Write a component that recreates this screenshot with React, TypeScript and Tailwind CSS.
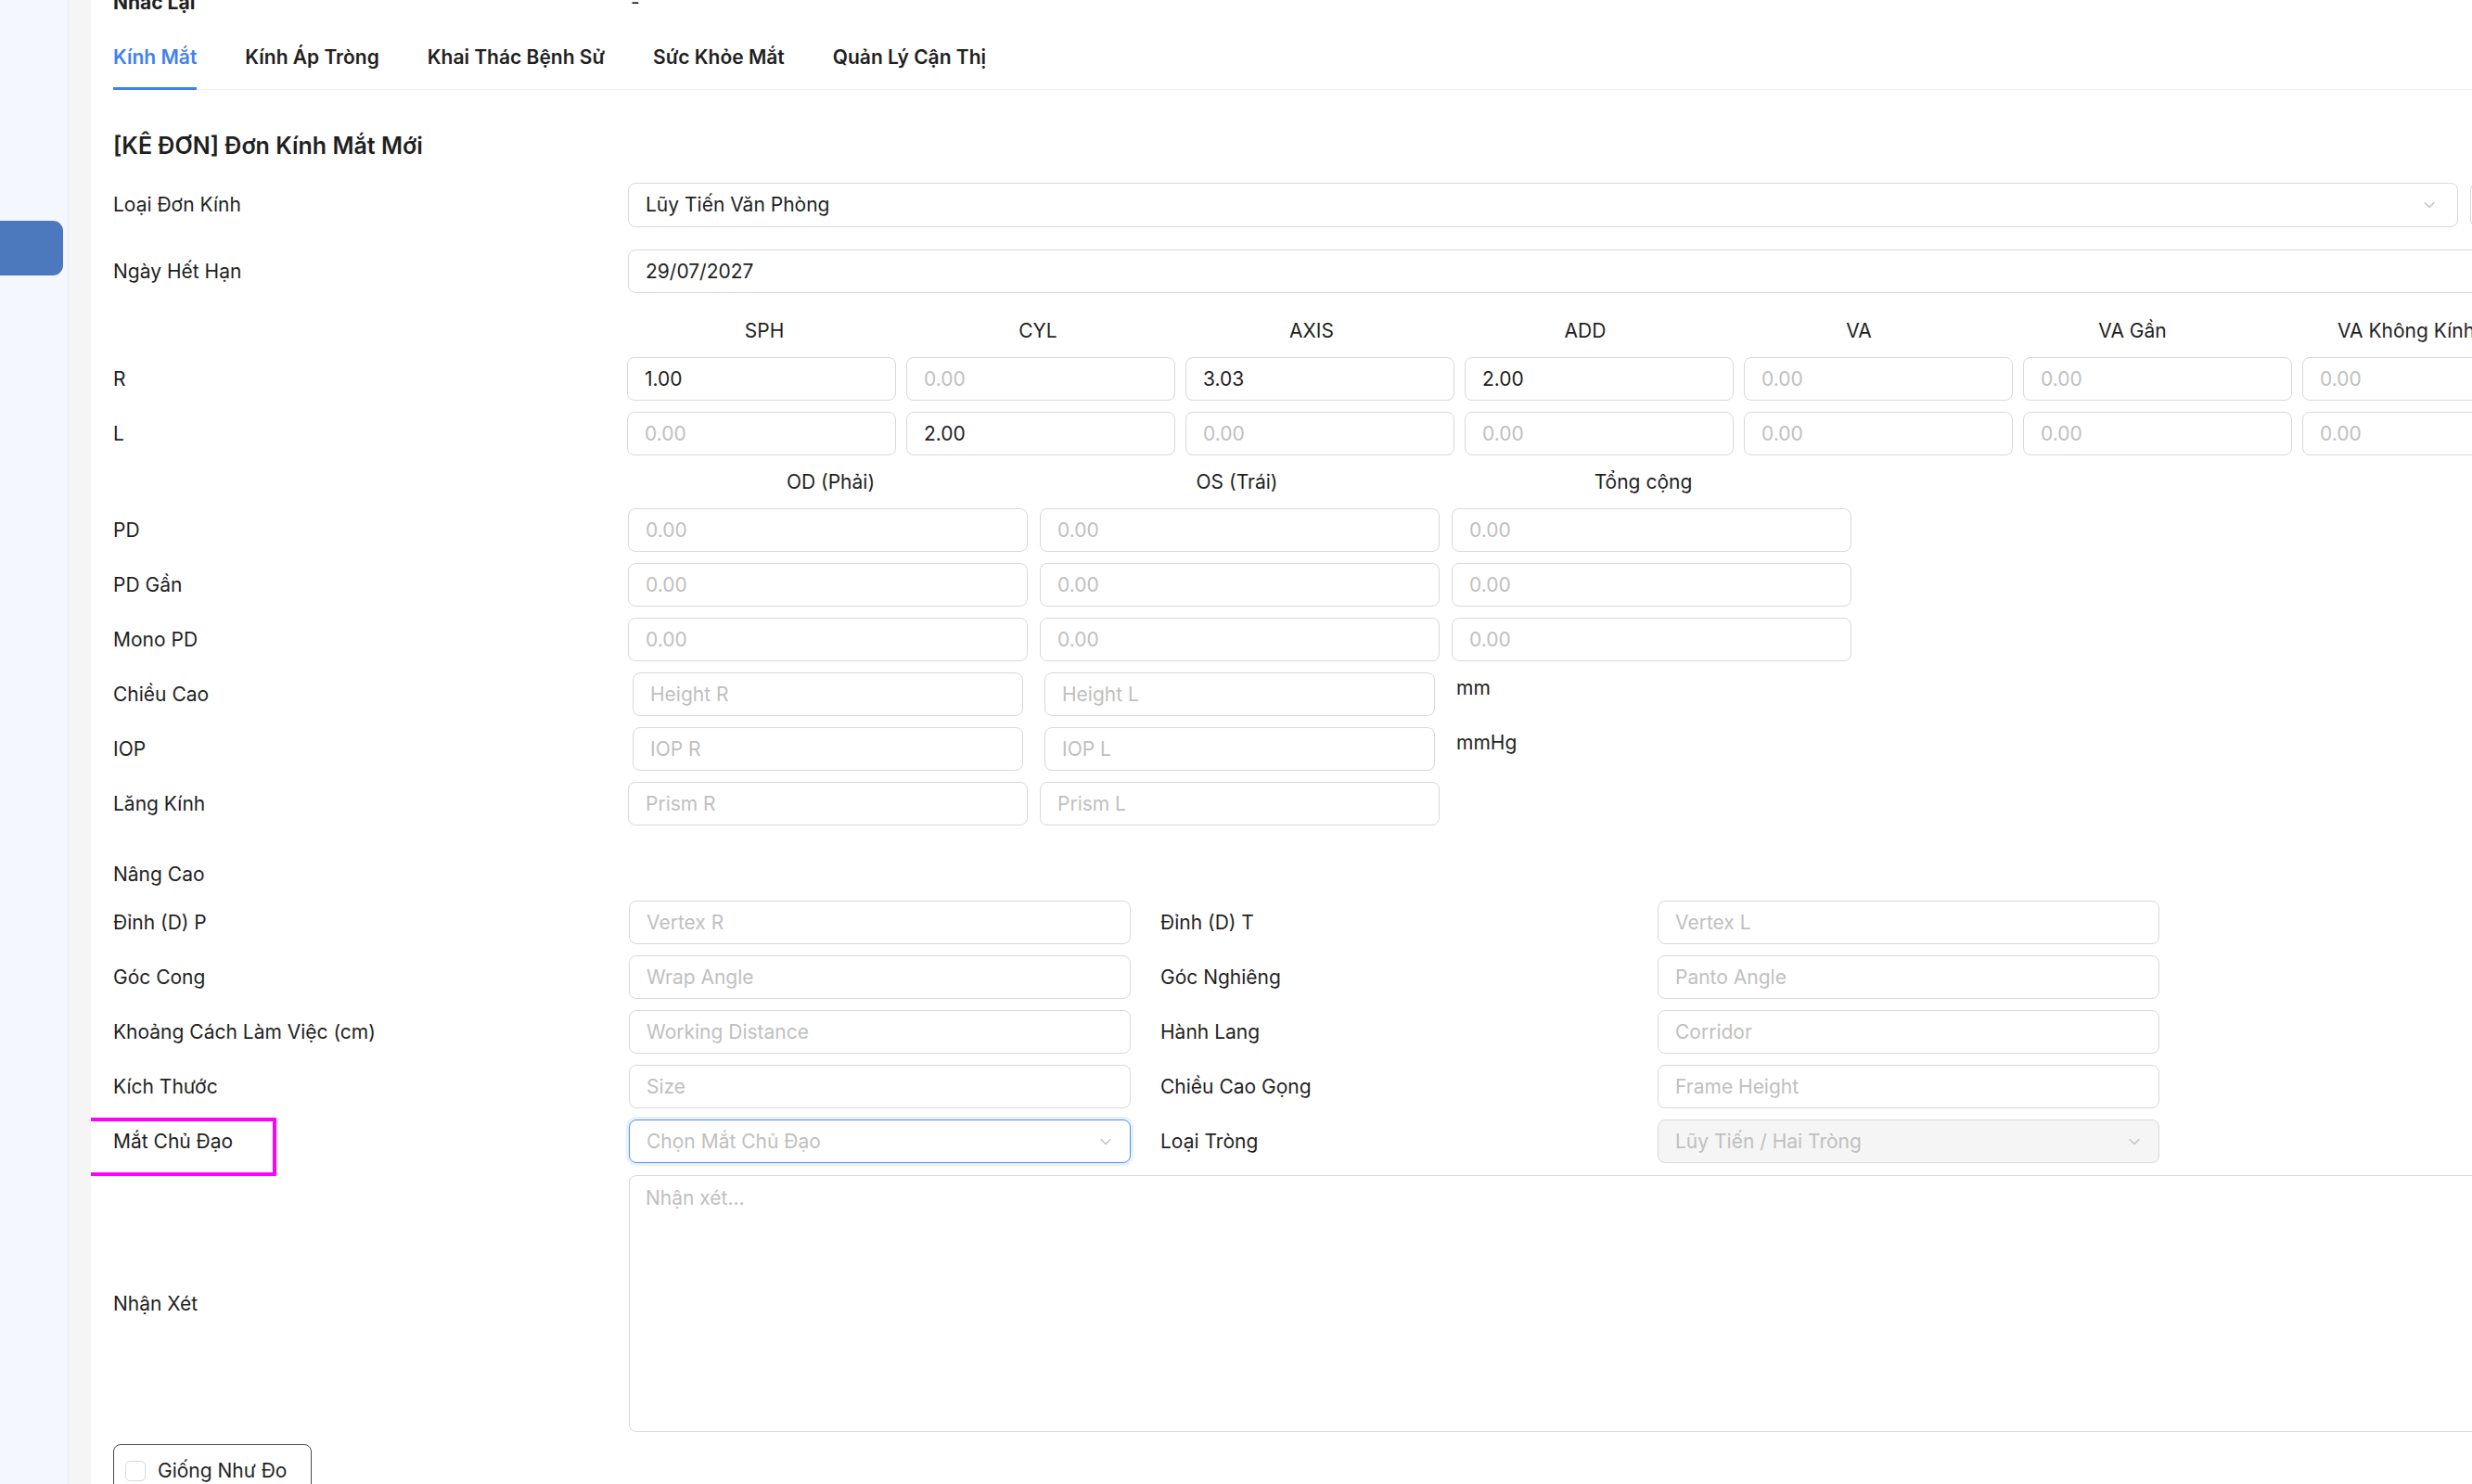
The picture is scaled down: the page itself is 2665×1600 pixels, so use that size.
import { ChevronDown } from "lucide-react";

const inputBase =
	"h-[47px] shrink-0 rounded-[8px] border border-[#d9d9d9] bg-white pl-[18px] text-[21px] text-[#1f1f1f] placeholder:text-[#bfbfbf] outline-none";

const Field = ({ w, value, placeholder }: { w: string; value?: string; placeholder?: string }) => (
	<input className={`${inputBase} ${w}`} defaultValue={value} placeholder={placeholder} />
);

const Label = ({ children }: { children: React.ReactNode }) => (
	<div className="w-[555px] shrink-0 text-[21px] leading-[28px]">{children}</div>
);

const tabs = ["Kính Mắt", "Kính Áp Tròng", "Khai Thác Bệnh Sử", "Sức Khỏe Mắt", "Quản Lý Cận Thị"];
const rxCols = ["SPH", "CYL", "AXIS", "ADD", "VA", "VA Gần", "VA Không Kính"];
const rRow = ["1.00", "", "3.03", "2.00", "", "", ""];
const lRow = ["", "2.00", "", "", "", "", ""];

const advanced = [
	["Đỉnh (D) P", "Vertex R", "Đỉnh (D) T", "Vertex L"],
	["Góc Cong", "Wrap Angle", "Góc Nghiêng", "Panto Angle"],
	["Khoảng Cách Làm Việc (cm)", "Working Distance", "Hành Lang", "Corridor"],
	["Kích Thước", "Size", "Chiều Cao Gọng", "Frame Height"],
];

function App() {
	return (
		<div className="flex w-[2665px] h-[1600px] overflow-hidden bg-white text-[#1f1f1f] font-['Inter','Noto_Sans',sans-serif]">
			<aside className="w-[74px] shrink-0 bg-[#f4f7fd] border-r border-[#e6ebf3] pt-[238px]">
				<div className="w-[68px] h-[59px] bg-[#4c78bd] rounded-r-[11px]" />
			</aside>
			<div className="w-[24px] shrink-0 bg-[#f5f5f5]" />

			<main className="flex-1 min-w-0 pl-[24px] overflow-hidden">
				{/* reminder row, cut at the top */}
				<div className="flex mt-[-11px] h-[28px] text-[21px] leading-[28px]">
					<div className="w-[558px] shrink-0 font-bold">Nhắc Lại</div>
					<div>-</div>
				</div>

				{/* tabs */}
				<div className="mt-[31px] flex gap-[52px] border-b border-[#eef0f3] text-[21px] leading-[28px] font-semibold">
					{tabs.map((t, i) => (
						<div
							key={t}
							className={
								i === 0
									? "pb-[18px] border-b-[3px] border-[#3f80f2] text-[#3f80f2] mb-[-1px]"
									: "pb-[18px] border-b-[3px] border-transparent mb-[-1px]"
							}
						>
							{t}
						</div>
					))}
				</div>

				<h2 className="mt-[44px] text-[25px] leading-[32px] font-semibold">[KÊ ĐƠN] Đơn Kính Mắt Mới</h2>

				{/* lens type */}
				<div className="mt-[24px] flex items-center">
					<Label>Loại Đơn Kính</Label>
					<div className="flex gap-[13px]">
						<div className="w-[1973px] h-[48px] rounded-[8px] border border-[#d9d9d9] flex items-center justify-between pl-[18px] pr-[20px] text-[21px]">
							<span>Lũy Tiến Văn Phòng</span>
							<ChevronDown size={20} strokeWidth={1.4} className="text-[#bfbfbf]" />
						</div>
						<div className="w-[60px] h-[48px] rounded-[8px] border border-[#d9d9d9]" />
					</div>
				</div>

				<div className="mt-[24px] flex items-center">
					<Label>Ngày Hết Hạn</Label>
					<Field w="w-[2300px]" value="29/07/2027" />
				</div>

				{/* refraction table */}
				<div className="mt-[27px] flex">
					<div className="w-[557px] shrink-0" />
					<div className="flex gap-[5px] text-[21px] leading-[28px]">
						{rxCols.map((c) => (
							<div key={c} className="w-[290px] shrink-0 text-center">
								{c}
							</div>
						))}
					</div>
				</div>
				<div className="mt-[14px] flex items-center">
					<div className="w-[554px] shrink-0 text-[21px]">R</div>
					<div className="flex gap-[11px]">
						{rRow.map((v, i) => (
							<Field key={i} w="w-[290px]" value={v} placeholder="0.00" />
						))}
					</div>
				</div>
				<div className="mt-[12px] flex items-center">
					<div className="w-[554px] shrink-0 text-[21px]">L</div>
					<div className="flex gap-[11px]">
						{lRow.map((v, i) => (
							<Field key={i} w="w-[290px]" value={v} placeholder="0.00" />
						))}
					</div>
				</div>

				{/* PD block */}
				<div className="mt-[15px] flex">
					<div className="w-[558px] shrink-0" />
					<div className="flex gap-[7px] text-[21px] leading-[28px]">
						{["OD (Phải)", "OS (Trái)", "Tổng cộng"].map((c) => (
							<div key={c} className="w-[431px] text-center">
								{c}
							</div>
						))}
					</div>
				</div>
				<div className="mt-[14px] flex flex-col gap-[12px]">
					{["PD", "PD Gần", "Mono PD"].map((l) => (
						<div key={l} className="flex items-center">
							<Label>{l}</Label>
							<div className="flex gap-[13px]">
								<Field w="w-[431px]" placeholder="0.00" />
								<Field w="w-[431px]" placeholder="0.00" />
								<Field w="w-[431px]" placeholder="0.00" />
							</div>
						</div>
					))}
					{[
						["Chiều Cao", "Height R", "Height L", "mm"],
						["IOP", "IOP R", "IOP L", "mmHg"],
					].map(([l, a, b, u]) => (
						<div key={l} className="flex items-center">
							<Label>{l}</Label>
							<div className="flex gap-[23px] pl-[5px]">
								<input className={`${inputBase} w-[421px] pl-[17px]`} placeholder={a} />
								<input className={`${inputBase} w-[421px] pl-[17px]`} placeholder={b} />
								<div className="self-start mt-[3px] text-[21px] leading-[28px]">{u}</div>
							</div>
						</div>
					))}
					<div className="flex items-center">
						<Label>Lăng Kính</Label>
						<div className="flex gap-[13px]">
							<Field w="w-[431px]" placeholder="Prism R" />
							<Field w="w-[431px]" placeholder="Prism L" />
						</div>
					</div>
				</div>

				{/* advanced */}
				<div className="mt-[39px] text-[21px] leading-[28px]">Nâng Cao</div>
				<div className="mt-[14px] flex flex-col gap-[12px]">
					{advanced.map(([l1, p1, l2, p2]) => (
						<div key={l1} className="flex items-center">
							<div className="w-[556px] shrink-0 text-[21px]">{l1}</div>
							<Field w="w-[541px]" placeholder={p1} />
							<div className="w-[536px] shrink-0 ml-[32px] text-[21px]">{l2}</div>
							<Field w="w-[541px]" placeholder={p2} />
						</div>
					))}
					<div className="flex items-center">
						<div className="relative w-[556px] shrink-0 text-[21px] leading-[28px]">
							Mắt Chủ Đạo
							<div className="absolute left-[-32px] top-[-12px] w-[208px] h-[63px] border-[4px] border-[#ff00ff]" />
						</div>
						<div className="w-[541px] h-[47px] shrink-0 rounded-[8px] border border-[#4f8ff7] ring-[3px] ring-[#e8f1ff] flex items-center justify-between pl-[18px] pr-[16px] text-[21px] text-[#bfbfbf]">
							<span>Chọn Mắt Chủ Đạo</span>
							<ChevronDown size={20} strokeWidth={1.4} />
						</div>
						<div className="w-[536px] shrink-0 ml-[32px] text-[21px]">Loại Tròng</div>
						<div className="w-[541px] h-[47px] shrink-0 rounded-[8px] border border-[#d9d9d9] bg-[#f5f5f5] flex items-center justify-between pl-[18px] pr-[16px] text-[21px] text-[#bfbfbf]">
							<span>Lũy Tiến / Hai Tròng</span>
							<ChevronDown size={20} strokeWidth={1.4} />
						</div>
					</div>
				</div>

				<div className="mt-[13px] flex items-center">
					<div className="w-[556px] shrink-0 text-[21px]">Nhận Xét</div>
					<textarea
						className="w-[2300px] h-[277px] shrink-0 resize-none rounded-[8px] border border-[#d9d9d9] px-[17px] py-[10px] text-[21px] leading-[28px] placeholder:text-[#bfbfbf] outline-none"
						placeholder="Nhận xét..."
					/>
				</div>

				<div className="mt-[13px] inline-flex items-center gap-[13px] h-[70px] w-[214px] rounded-[8px] border border-[#4a4a4a] pl-[12px] pb-[12px] text-[21px]">
					<span className="w-[22px] h-[22px] rounded-[5px] border border-[#d9d9d9] bg-white" />
					<span>Giống Như Đo</span>
				</div>
			</main>
		</div>
	);
}

export default App;
